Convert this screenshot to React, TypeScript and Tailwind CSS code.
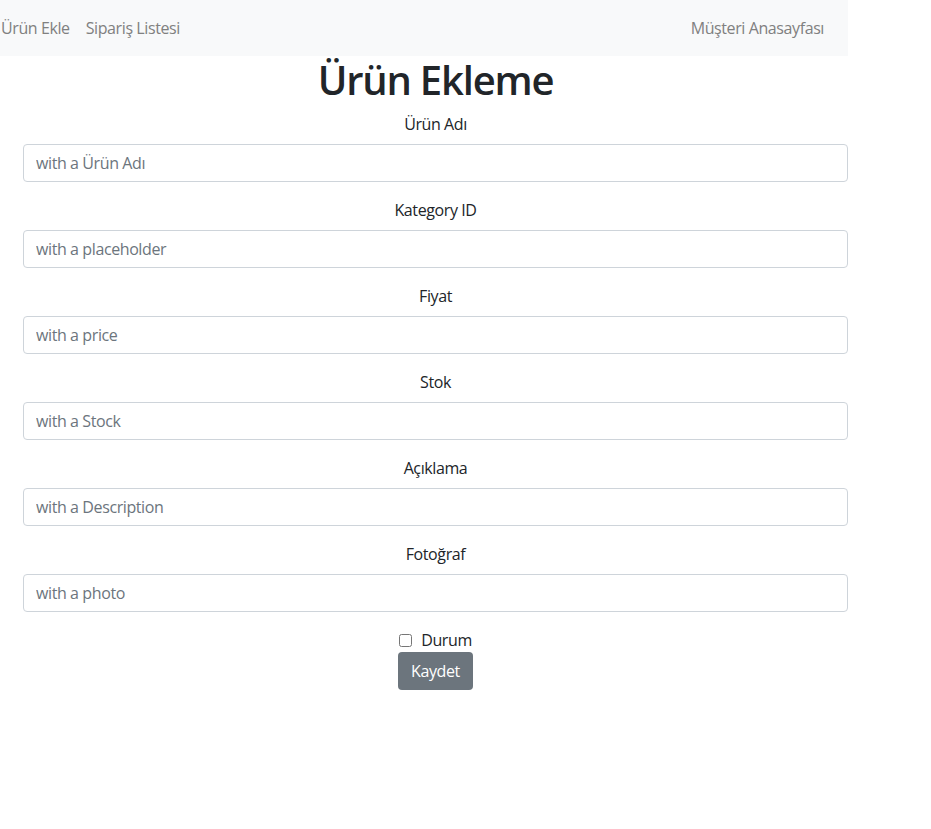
import React from 'react';

const FIELDS = [
  { label: 'Ürün Adı', placeholder: 'with a Ürün Adı' },
  { label: 'Kategory ID', placeholder: 'with a placeholder' },
  { label: 'Fiyat', placeholder: 'with a price' },
  { label: 'Stok', placeholder: 'with a Stock' },
  { label: 'Açıklama', placeholder: 'with a Description' },
  { label: 'Fotoğraf', placeholder: 'with a photo' },
];

const App: React.FC = () => {
  return (
    <div className="min-h-screen bg-white text-[#212529] font-['Open_Sans','Noto_Sans',sans-serif] text-[16px] leading-6 tracking-[-0.4px]">
      {/* Navbar */}
      <nav className="w-[848px] h-[56px] bg-[#f8f9fa] flex items-center justify-between pr-[24px]">
        <div className="flex items-center gap-[16px] text-[#808080]">
          <a href="#" className="pl-[1px]">Ürün Ekle</a>
          <a href="#">Sipariş Listesi</a>
        </div>
        <a href="#" className="text-[#808080]">Müşteri Anasayfası</a>
      </nav>

      {/* Form */}
      <main className="w-[848px] pl-[23px]">
        <h1 className="text-center text-[40px] leading-[48px] font-semibold tracking-[-1.2px] mb-2">Ürün Ekleme</h1>
        <form className="text-center">
          {FIELDS.map((f) => (
            <div key={f.label} className="mb-4">
              <label className="block mb-2">{f.label}</label>
              <input
                type="text"
                placeholder={f.placeholder}
                className="block w-full h-[38px] px-3 border border-[#ced4da] rounded-[4px] placeholder:text-[#6c757d] text-left"
              />
            </div>
          ))}
          <div className="flex items-center justify-center gap-[9px] h-6">
            <input type="checkbox" className="w-[13px] h-[13px]" />
            <span>Durum</span>
          </div>
          <button type="button" className="bg-[#6c757d] text-white h-[38px] px-[13px] rounded-[4px]">
            Kaydet
          </button>
        </form>
      </main>
    </div>
  );
};

export default App;
